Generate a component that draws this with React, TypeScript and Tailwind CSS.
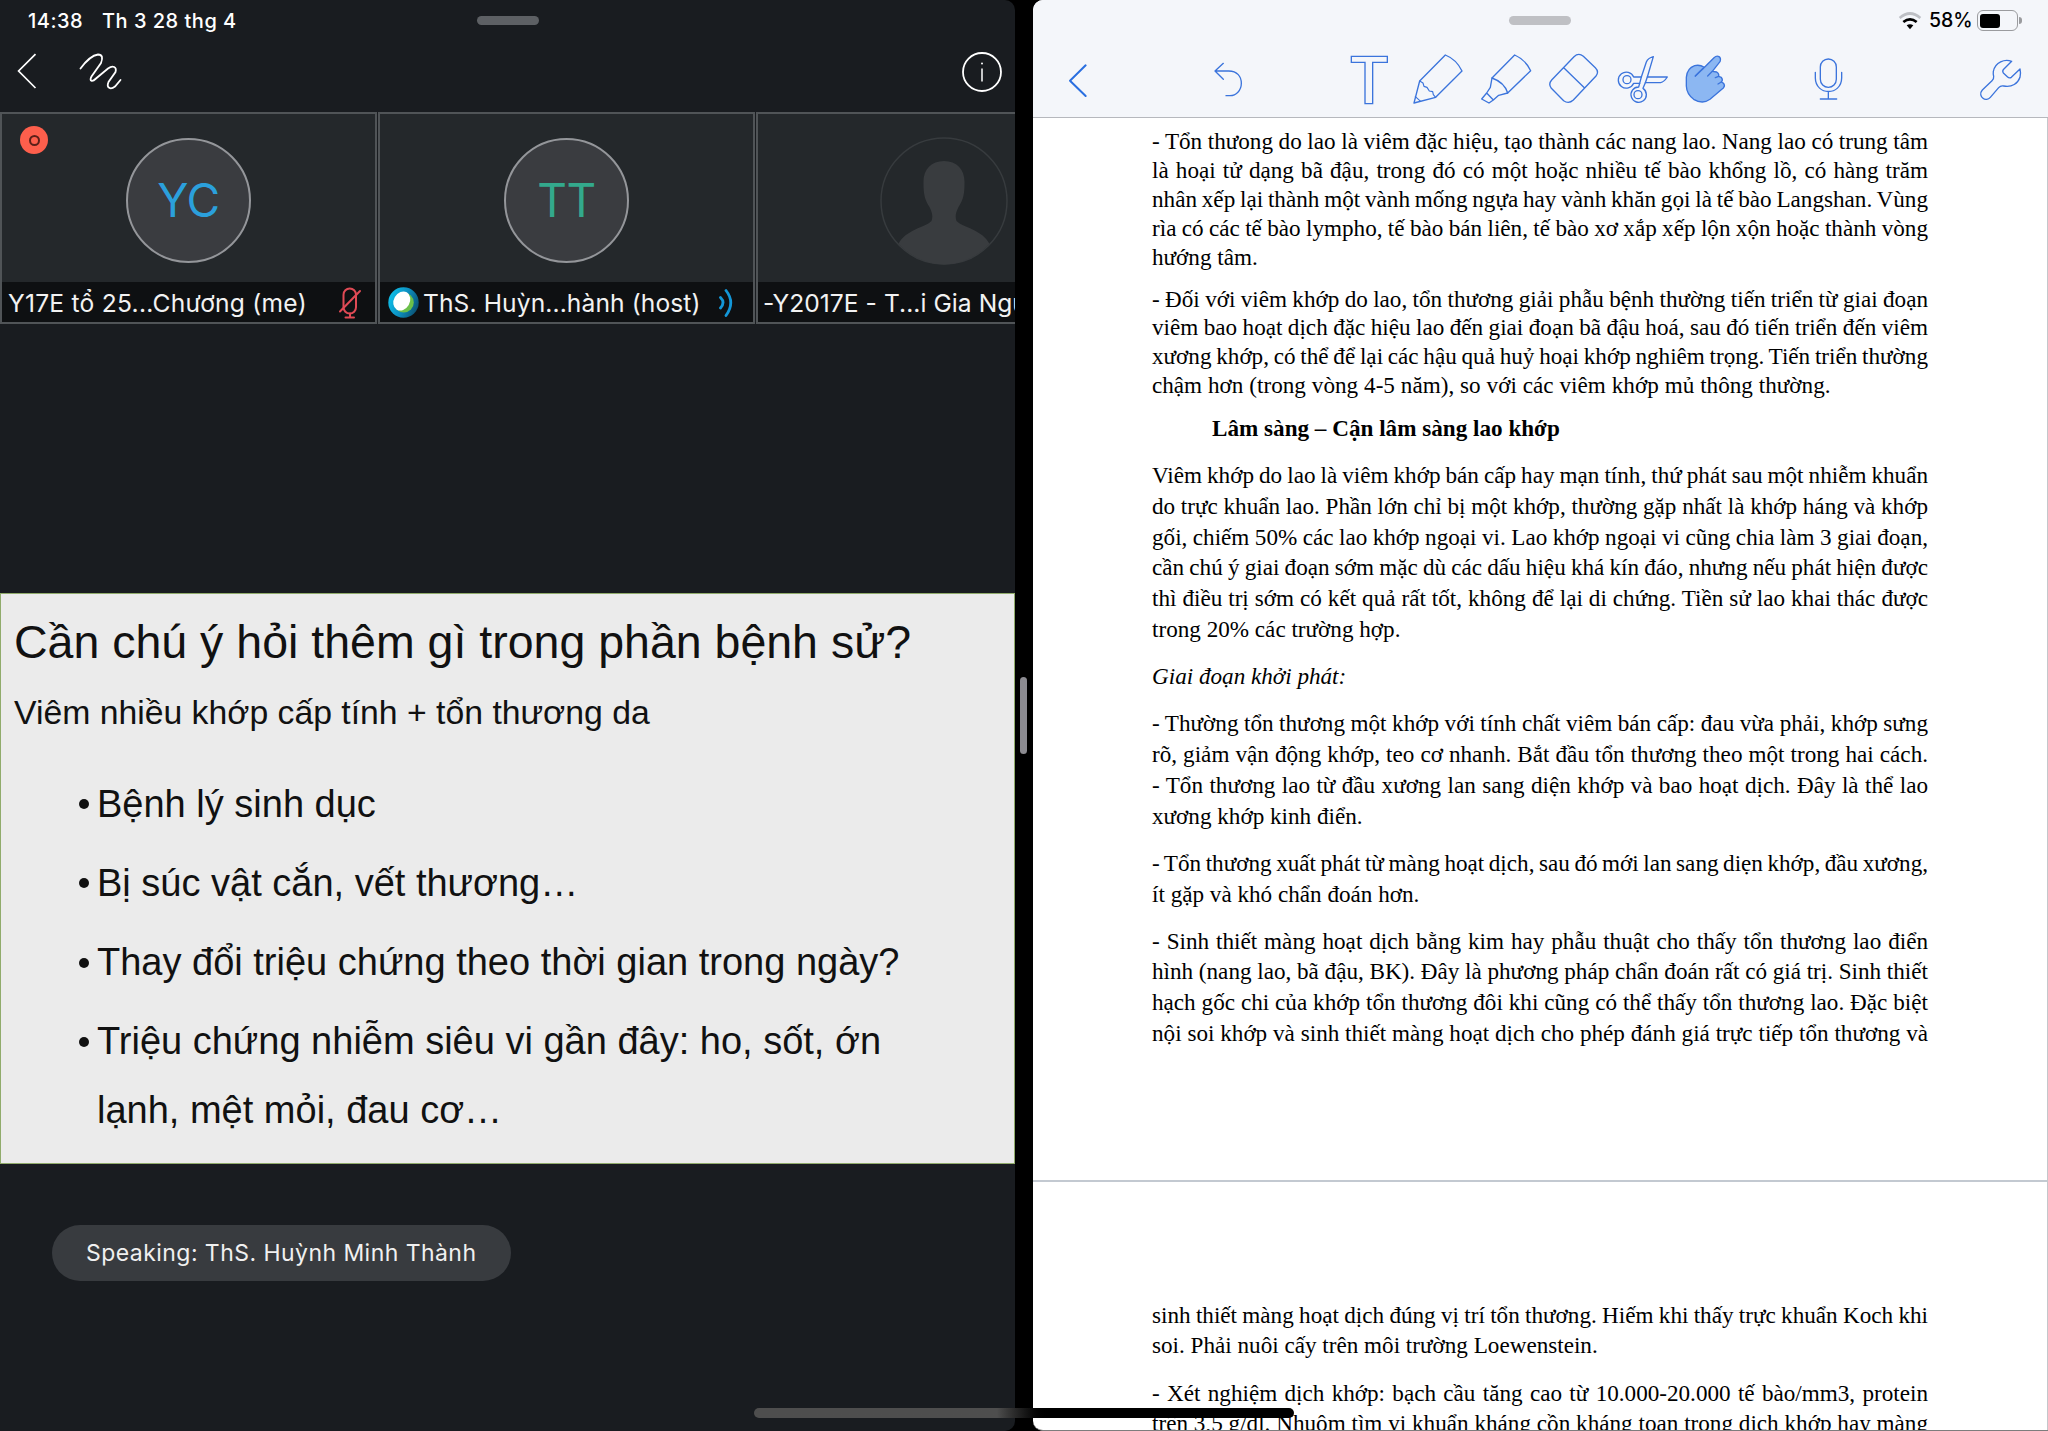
import type { ReactNode } from 'react';

type Block = {
  lines: string[];
  className: string;
  lastOpen?: boolean;
};

const pageOne: Block[] = [
  {
    className: 'mt-[9px] leading-[29px]',
    lastOpen: true,
    lines: [
      '- Tổn thưong do lao là viêm đặc hiệu, tạo thành các nang lao. Nang lao có trung tâm',
      'là hoại tử dạng bã đậu, trong đó có một hoặc nhiều tế bào khổng lồ, có hàng trăm',
      'nhân xếp lại thành một vành mống ngựa hay vành khăn gọi là tế bào Langshan. Vùng',
      'rìa có các tế bào lympho, tế bào bán liên, tế bào xơ xắp xếp lộn xộn hoặc thành vòng',
      'hướng tâm.',
    ],
  },
  {
    className: 'mt-[12.5px] leading-[28.9px] [word-spacing:0.15px]',
    lastOpen: true,
    lines: [
      '- Đối với viêm khớp do lao, tổn thương giải phẫu bệnh thường tiến triển từ giai đoạn',
      'viêm bao hoạt dịch đặc hiệu lao đến giai đoạn bã đậu hoá, sau đó tiến triển đến viêm',
      'xương khớp, có thể để lại các hậu quả huỷ hoại khớp nghiêm trọng. Tiến triển thường',
      'chậm hơn (trong vòng 4-5 năm), so với các viêm khớp mủ thông thường.',
    ],
  },
  {
    className: 'mt-[12.4px] pl-[60px] font-bold leading-[30.8px]',
    lastOpen: true,
    lines: ['Lâm sàng – Cận lâm sàng lao khớp'],
  },
  {
    className: 'mt-[17px] leading-[30.7px]',
    lastOpen: true,
    lines: [
      'Viêm khớp do lao là viêm khớp bán cấp hay mạn tính, thứ phát sau một nhiễm khuẩn',
      'do trực khuẩn lao. Phần lớn chỉ bị một khớp, thường gặp nhất là khớp háng và khớp',
      'gối, chiếm 50% các lao khớp ngoại vi. Lao khớp ngoại vi cũng chia làm 3 giai đoạn,',
      'cần chú ý giai đoạn sớm mặc dù các dấu hiệu khá kín đáo, nhưng nếu phát hiện được',
      'thì điều trị sớm có kết quả rất tốt, không để lại di chứng. Tiền sử lao khai thác được',
      'trong 20% các trường hợp.',
    ],
  },
  {
    className: 'mt-[16px] italic leading-[30.8px]',
    lastOpen: true,
    lines: ['Giai đoạn khởi phát:'],
  },
  {
    className: 'mt-[17px] leading-[30.9px]',
    lastOpen: true,
    lines: [
      '- Thường tổn thương một khớp với tính chất viêm bán cấp: đau vừa phải, khớp sưng',
      'rõ, giảm vận động khớp, teo cơ nhanh. Bắt đầu tổn thương theo một trong hai cách.',
      '- Tổn thương lao từ đầu xương lan sang diện khớp và bao hoạt dịch. Đây là thể lao',
      'xương khớp kinh điển.',
    ],
  },
  {
    className: 'mt-[16px] leading-[30.8px]',
    lastOpen: true,
    lines: [
      '- Tổn thương xuất phát từ màng hoạt dịch, sau đó mới lan sang diẹn khớp, đầu xương,',
      'ít gặp và khó chẩn đoán hơn.',
    ],
  },
  {
    className: 'mt-[16px] leading-[30.8px]',
    lines: [
      '- Sinh thiết màng hoạt dịch bằng kim hay phẫu thuật cho thấy tổn thương lao điển',
      'hình (nang lao, bã đậu, BK). Đây là phương pháp chẩn đoán rất có giá trị. Sinh thiết',
      'hạch gốc chi của khớp tổn thương đôi khi cũng có thể thấy tổn thương lao. Đặc biệt',
      'nội soi khớp và sinh thiết màng hoạt dịch cho phép đánh giá trực tiếp tổn thương và',
    ],
  },
];

const pageTwo: Block[] = [
  {
    className: 'leading-[30.8px]',
    lastOpen: true,
    lines: [
      'sinh thiết màng hoạt dịch đúng vị trí tổn thương. Hiếm khi thấy trực khuẩn Koch khi',
      'soi. Phải nuôi cấy trên môi trường Loewenstein.',
    ],
  },
  {
    className: 'mt-[16.5px] leading-[30.8px]',
    lines: [
      '- Xét nghiệm dịch khớp: bạch cầu tăng cao từ 10.000-20.000 tế bào/mm3, protein',
      'trên 3,5 g/dl. Nhuộm tìm vi khuẩn kháng cồn kháng toan trong dịch khớp hay màng',
    ],
  },
];

function TextBlock({ block }: { block: Block }) {
  return (
    <div className={block.className}>
      {block.lines.map((line, i) => {
        const open = block.lastOpen && i === block.lines.length - 1;
        return (
          <p
            key={i}
            className={
              open
                ? 'whitespace-nowrap'
                : 'w-[776px] whitespace-nowrap [text-align-last:justify] text-justify [word-spacing:-3px]'
            }
          >
            {line}
          </p>
        );
      })}
    </div>
  );
}

function Tile({ children, label, className }: { children: ReactNode; label: ReactNode; className: string }) {
  return (
    <div className={`flex h-[212px] shrink-0 flex-col border-2 border-[#505457] bg-[#24282b] ${className}`}>
      <div className="relative flex flex-1 items-center justify-center pt-[5px]">{children}</div>
      <div className="flex h-[40px] items-center whitespace-nowrap bg-[#0e1012] pt-[3px] text-[24.6px] text-[#f2f2f2]">
        {label}
      </div>
    </div>
  );
}

function Initials({ text, className }: { text: string; className: string }) {
  return (
    <div
      className={`flex size-[125px] items-center justify-center rounded-full border-2 border-[#94969a] bg-[#3a3c40] text-[46px] tracking-[-0.5px] ${className}`}
    >
      {text}
    </div>
  );
}

function WebexMark() {
  return (
    <svg className="mb-[2px] ml-[8px] size-[31px] shrink-0" viewBox="0 0 31 31">
      <defs>
        <linearGradient id="ring" x1="0" y1="0.3" x2="1" y2="0.7">
          <stop offset="0" stopColor="#0fc0ea" />
          <stop offset="0.5" stopColor="#0c8fc0" />
          <stop offset="1" stopColor="#0b4f70" />
        </linearGradient>
      </defs>
      <circle cx="15.500" cy="15.500" r="15.200" fill="url(#ring)" />
      <circle cx="15.800" cy="15.500" r="10" fill="#6cc04a" />
      <ellipse cx="13.800" cy="14" rx="8" ry="10" fill="#fff" transform="rotate(30 13.800 14)" />
    </svg>
  );
}

const ink = { fill: 'none', stroke: '#3b74dc', strokeWidth: 4, strokeLinejoin: 'round', strokeLinecap: 'round' } as const;

function Tool({ x, w, className, children }: { x: number; w: number; className: string; children: ReactNode }) {
  return (
    <svg className={`h-[66px] shrink-0 ${className}`} viewBox={`${x} 141 ${w} 198`} {...ink}>
      {children}
    </svg>
  );
}

function Toolbar() {
  return (
    <div className="flex h-[76px] items-start pt-[6px]">
      <Tool x={141} w={69} className="ml-[34px] w-[23px]">
        <path d="M197 196L150 242L197 288" stroke="#2a6fe0" strokeWidth={6} />
      </Tool>
      <Tool x={576} w={99} className="ml-[122px] w-[33px]">
        <path d="M610 190L585 213L610 238M586 213H626C652 213 664 230 664 250C664 272 648 287 630 287H618" />
      </Tool>
      <Tool x={987} w={123} className="ml-[104px] w-[41px]">
        <path d="M994 169H1102V187H1058V311H1035V187H994Z" strokeLinejoin="miter" />
      </Tool>
      <Tool x={1176} w={156} className="ml-[22px] w-[52px]">
        <path d="M1199 243L1276 165Q1309 178 1326 213L1247 292L1182 309Z" />
        <path d="M1199 243L1209 249L1212 259L1221 262L1228 273L1238 275L1240 284L1247 292M1186 290L1202 304" strokeWidth={3.500} />
      </Tool>
      <Tool x={1377} w={162} className="ml-[15px] w-[54px]">
        <path d="M1416 234L1484 165Q1516 179 1532 212L1463 279Q1453 247 1416 234Z" />
        <path d="M1416 234L1411 262L1400 279M1463 279L1436 286L1420 300M1400 279L1420 300L1407 309L1385 297L1400 279" />
      </Tool>
      <Tool x={57} w={159} className="ml-[14px] w-[53px]">
        <path d="M71 240L138 170Q152 157 166 169L202 203Q214 215 204 228L136 300Q122 313 107 302L70 265Q60 252 71 240ZM108 204L169 263" />
      </Tool>
      <Tool x={264} w={162} className="ml-[16px] w-[54px]">
        <circle cx={297} cy={239} r={12} />
        <circle cx={330} cy={284} r={12} />
        <path d="M317 231A24 24 0 1 0 317 250H335L332 261A23 23 0 1 0 345 265L352 248H398Q408 246 418 231H358L376 170Q360 174 355 186L340 231Z" />
        <path d="M340 231L335 250M358 231L352 248" />
      </Tool>
      <Tool x={468} w={132} className="ml-[14px] w-[44px]">
        <path
          d="M502 228L529 202Q515 193 500 197Q477 205 475 232V258Q476 282 497 298Q524 314 546 298L586 264Q592 257 587 250L580 246Q586 240 580 232L572 229Q574 221 566 216L553 214L576 185Q580 175 573 170Q566 166 558 173L522 209"
          fill="#8cb7f2"
        />
        <path d="M502 228L524 206M553 214L539 228M572 229L562 233M580 246L570 252" />
      </Tool>
      <Tool x={855} w={93} className="ml-[85px] w-[31px]">
        <rect x={877} y={177} width={48} height={85} rx={24} />
        <path d="M862 217V234C863 288 940 288 941 234V217M901 275V297M877 297H926" />
      </Tool>
      <Tool x={1350} w={138} className="ml-[134px] w-[46px]">
        <path d="M1451 184C1430 176 1402 186 1396 214Q1395 222 1397 229Q1398 236 1392 242L1363 270C1354 280 1359 290 1365 295C1371 300 1381 299 1387 292L1412 263Q1418 256 1427 258C1452 263 1470 250 1476 232Q1479 219 1476 207L1450 232Q1444 236 1438 230L1426 219Q1422 213 1427 208L1451 184Z" />
      </Tool>
    </div>
  );
}

function MeetingPane() {
  return (
    <section className="flex w-[1015px] shrink-0 flex-col overflow-hidden rounded-r-[10px] bg-[#191c20] font-[Inter,sans-serif] text-white">
      <div className="flex h-[41px] items-center text-[20px] font-medium tracking-[0.5px]">
        <span className="ml-[28px] w-[74px]">14:38</span>
        <span className="w-[375px]">Th 3 28 thg 4</span>
        <span className="h-[9px] w-[62px] rounded-full bg-[#5d6064]" />
      </div>
      <div className="flex h-[60px] items-center">
        <svg className="ml-[16px] h-[40px] w-[24px]" viewBox="16 51 24 40" fill="none" stroke="#fff" strokeWidth="1.700">
          <path d="M35.500 54.200L18.600 71L35.500 88" />
        </svg>
        <svg className="ml-[36px] h-[40px] w-[52px]" viewBox="76 51 52 40" fill="none" stroke="#fff" strokeWidth="1.800" strokeLinecap="round">
          <path d="M80.500 68.500C86 61 91 55.500 98 54.500C102.500 54.500 103 58 101 63L91.500 76.500C89 81 92 82.500 96 78.500L108 68.500C113 65 117 67 115.500 72L108.500 82C106 88 110.500 90 115 86.500L120.500 80" />
        </svg>
        <svg className="ml-auto mr-[12px] size-[42px]" viewBox="0 0 42 42" fill="none" stroke="#fff" strokeWidth="1.800">
          <circle cx="21" cy="22" r="19" />
          <path d="M21 18.500V31.500" strokeWidth="1.500" />
          <circle cx="21" cy="13.500" r="1" fill="#fff" stroke="none" />
        </svg>
      </div>
      <div className="mt-[11px] flex">
        <Tile
          className="w-[377px]"
          label={
            <>
              <span className="ml-[6px] w-[300px] tracking-[0.25px]">Y17E tổ 25...Chương (me)</span>
              <svg className="mb-[2px] ml-[30px] h-[34px] w-[24px]" viewBox="338 286 24 34" fill="none" stroke="#e04a55" strokeWidth="2" strokeLinecap="round">
                <rect x="343.500" y="288.500" width="12.500" height="25" rx="6.250" />
                <path d="M340 311.500L360 291M350 313.500V317.500M345.500 317.500H354" />
              </svg>
            </>
          }
        >
          <div className="absolute left-[18px] top-[12px] flex size-[28px] items-center justify-center rounded-full bg-[#fe5f4c]">
            <span className="size-[11px] rounded-full border-2 border-[#5c2019]" />
          </div>
          <Initials text="YC" className="text-[#2ba0dc]" />
        </Tile>
        <Tile
          className="ml-px w-[377px]"
          label={
            <>
              <WebexMark />
              <span className="ml-[4px] w-[276px] tracking-[0.1px]">ThS. Huỳn...hành (host)</span>
              <svg className="mb-[2px] ml-[18px] h-[32px] w-[18px]" viewBox="718 287 18 32" fill="none" stroke="#1397d8" strokeWidth="2.800" strokeLinecap="round">
                <path d="M721.500 297.500Q726.500 302.500 721.500 308M727 290.500Q736.500 302.500 727 315.500" />
              </svg>
            </>
          }
        >
          <Initials text="TT" className="text-[#33a98c]" />
        </Tile>
        <Tile className="ml-px w-[377px]" label={<span className="ml-[5px] tracking-[0.05px]">-Y2017E - T...i Gia Nguyễn</span>}>
          <svg className="mr-[2px] size-[128px]" viewBox="0 0 128 128">
            <circle cx="64" cy="64" r="63" fill="none" stroke="#373b3e" strokeWidth="1.500" />
            <path
              d="M64 24C77 24 85 33 84.500 46C84.500 58 83 63 78.500 70C75.500 76 75 80 76.500 84C82 90 103 93 109.500 107Q90 127 64 127.500Q38 127 18.500 107C25 93 46 90 51.500 84C53 80 52.500 76 49.500 70C45 63 43.500 58 43.500 46C43 33 51 24 64 24Z"
              fill="#393c3f"
            />
          </svg>
        </Tile>
      </div>
      <div className="mt-[269px] flex h-[571px] flex-col border border-[#90ab6b] bg-[#ebebeb] font-['Liberation_Sans',Arial,sans-serif] text-[#111]">
        <h1 className="mt-[17.5px] whitespace-nowrap pl-[13px] text-[46.5px] leading-[60px]">
          Cần chú ý hỏi thêm gì trong phần bệnh sử?
        </h1>
        <p className="mt-[15px] whitespace-nowrap pl-[13px] text-[33.75px] leading-[50px]">
          Viêm nhiều khớp cấp tính + tổn thương da
        </p>
        <ul className="mt-[28px] whitespace-nowrap pl-[78px] text-[38px]">
          {[
            'Bệnh lý sinh dục',
            'Bị súc vật cắn, vết thương…',
            'Thay đổi triệu chứng theo thời gian trong ngày?',
            'Triệu chứng nhiễm siêu vi gần đây: ho, sốt, ớn',
          ].map((item) => (
            <li key={item} className="flex items-center leading-[79.2px]">
              <span className="mr-[8px] size-[10px] rounded-full bg-[#111]" />
              {item}
            </li>
          ))}
          <li className="pl-[18px] leading-[58px]">lạnh, mệt mỏi, đau cơ…</li>
        </ul>
      </div>
      <div className="ml-[52px] mt-[61px] flex h-[56px] w-[459px] items-center rounded-full bg-[#383b3f] pl-[34px] text-[23px] tracking-[0.45px] text-[#f0f0f0]">
        Speaking: ThS. Huỳnh Minh Thành
      </div>
    </section>
  );
}

function NotesPane() {
  return (
    <section className="flex min-w-0 flex-1 flex-col overflow-hidden rounded-l-[10px] border-b border-[#7d7d7d] bg-white text-black">
      <header className="h-[118px] shrink-0 border-b border-[#b6b8bd] bg-[#f4f6fa]">
        <div className="flex h-[41px] items-center font-[Inter,sans-serif]">
          <span className="ml-[476px] h-[9px] w-[62px] rounded-full bg-[#bfc0c4]" />
          <svg className="ml-[327px] h-[18px] w-[24px]" viewBox="1110 36 72 54" fill="none">
            <path d="M1115 54Q1146 27 1177 54" stroke="#bdbfc4" strokeWidth="8" />
            <path d="M1126 66Q1146 50 1166 66" stroke="#000" strokeWidth="8" />
            <path d="M1136 76Q1146 69 1156 76L1146 88Z" fill="#000" />
          </svg>
          <span className="ml-[7px] w-[48px] text-[19.5px] font-medium">58%</span>
          <span className="flex h-[21px] w-[41px] items-center rounded-[6px] border-[1.5px] border-[#9a9b9e] p-[2px]">
            <span className="h-[14px] w-[20px] rounded-[3px] bg-black" />
          </span>
          <span className="ml-px h-[7px] w-[3px] rounded-r-full bg-[#9a9b9e]" />
        </div>
        <Toolbar />
      </header>
      <div className="flex min-h-0 flex-1 flex-col border-r border-[#c4c7cb] font-['Liberation_Serif','Times_New_Roman',serif] text-[23.15px]">
        <article className="h-[1064px] shrink-0 border-b-2 border-[#c3c9d1] pl-[119px]">
          {pageOne.map((b, i) => (
            <TextBlock key={i} block={b} />
          ))}
        </article>
        <article className="min-h-0 flex-1 overflow-hidden pl-[119px] pt-[117.5px]">
          {pageTwo.map((b, i) => (
            <TextBlock key={i} block={b} />
          ))}
        </article>
      </div>
    </section>
  );
}

export default function App() {
  return (
    <main className="relative flex h-[1431px] w-[2048px] overflow-hidden bg-black">
      <MeetingPane />
      <div className="flex w-[18px] shrink-0 pl-[5px] pt-[677px]">
        <span className="h-[77px] w-[7px] rounded-full bg-[#8c8b91]" />
      </div>
      <NotesPane />
      <div className="absolute bottom-[13px] left-[754px] h-[10px] w-[540px] rounded-full bg-linear-to-r from-[#4e4e4e] from-45% to-black to-55%" />
    </main>
  );
}
